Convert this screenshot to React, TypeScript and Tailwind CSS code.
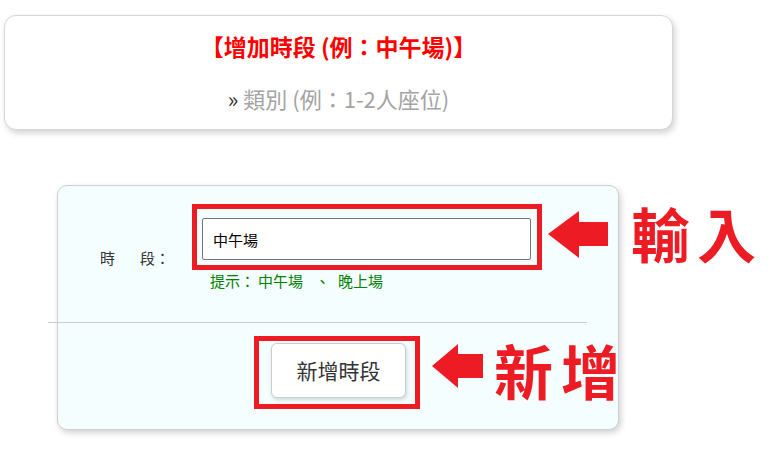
import React from "react";

const cjk = { fontFamily: '"Noto Sans CJK TC", "Noto Sans", sans-serif' };

export default function App() {
  return (
    <div className="relative w-[778px] h-[451px] overflow-hidden bg-white" style={cjk}>
      {/* Top card */}
      <div className="ml-[4px] mt-[15px] w-[669px] h-[115px] rounded-[12px] border border-[#d6d6d6] bg-white shadow-[2px_3px_6px_rgba(0,0,0,0.18)] flex flex-col items-center">
        <div className="mt-[14px] text-[23px] leading-[33px] font-bold text-[#ff0000]">
          【增加時段 (例：中午場)】
        </div>
        <div className="mt-[20px] text-[22px] leading-[30px] text-[#a3a3a3]">
          <span className="text-[#333]">»</span> 類別 (例：1-2人座位)
        </div>
      </div>

      {/* Form card */}
      <div className="ml-[57px] mt-[55px] w-[562px] h-[245px] rounded-[10px] border border-[#cfcfcf] bg-[#f4feff] shadow-[2px_3px_6px_rgba(0,0,0,0.18)]">
        <div className="mt-[32px] flex">
          <div className="w-[144px] pl-[42px] pt-[30px] text-[15px] leading-[20px] text-[#333]">
            <span>時</span>
            <span className="ml-[25px]">段：</span>
          </div>
          <div className="flex flex-col">
            <input
              readOnly
              value="中午場"
              className="w-[329px] h-[42px] border border-[#767676] rounded-[2px] bg-white px-[10px] text-[15px] text-black outline-none"
              style={cjk}
            />
            <div className="mt-[11px] pl-[8px] text-[15px] leading-[20px] text-[#008000]">
              <span>提示：</span>
              <span className="ml-[3px]">中午場</span>
              <span className="ml-[12px]">、</span>
              <span className="ml-[8px]">晚上場</span>
            </div>
          </div>
        </div>
        <div className="mt-[31px] -ml-[10px] w-[539px] h-px bg-[#cccccc]" />
        <button className="mt-[20px] ml-[213px] w-[135px] h-[55px] rounded-[6px] border border-[#cccccc] bg-white text-[21px] text-[#333] shadow-[1px_2px_4px_rgba(0,0,0,0.15)]">
          新增時段
        </button>
      </div>

      {/* Annotation overlays */}
      <div className="absolute left-[192px] top-[204px] w-[350px] h-[66px] border-[5px] border-[#ed1c24]" />
      <div className="absolute left-[254px] top-[336px] w-[166px] h-[73px] border-[5px] border-[#ed1c24]" />

      <svg className="absolute left-0 top-0" width="778" height="451" viewBox="0 0 778 451">
        <polygon
          points="548,234 579,211 579,222 608,222 608,246 579,246 579,258"
          fill="#ed1c24"
        />
        <polygon
          points="432,366 458,344 458,354 483,354 483,378 458,378 458,388"
          fill="#ed1c24"
        />
      </svg>

      <div className="absolute left-[631px] top-[203px] text-[59px] leading-none font-bold text-[#ed1c24] tracking-[7px] whitespace-nowrap">
        輸入
      </div>
      <div className="absolute left-[494px] top-[340px] text-[59px] leading-none font-bold text-[#ed1c24] tracking-[8px] whitespace-nowrap">
        新增
      </div>
    </div>
  );
}
